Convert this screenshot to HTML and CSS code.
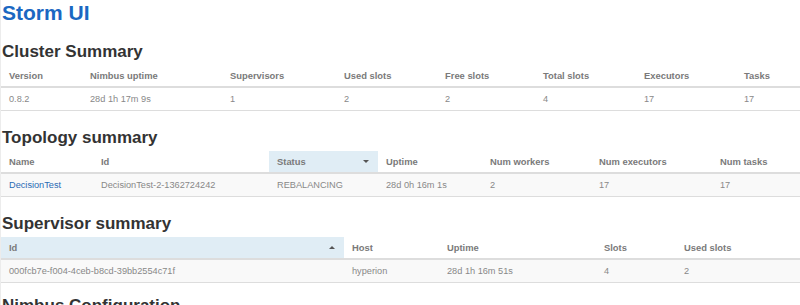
FILE: index.html
```html
<!DOCTYPE html>
<html>
<head>
<meta charset="utf-8">
<title>Storm UI</title>
<link rel="stylesheet" href="styles.css">
</head>
<body>
<h1 class="title">Storm UI</h1>

<h2 class="section-title">Cluster Summary</h2>
<table class="grid">
  <thead>
    <tr>
      <th class="cs-1">Version</th>
      <th class="cs-2">Nimbus uptime</th>
      <th class="cs-3">Supervisors</th>
      <th class="cs-4">Used slots</th>
      <th class="cs-5">Free slots</th>
      <th class="cs-6">Total slots</th>
      <th class="cs-7">Executors</th>
      <th class="cs-8">Tasks</th>
    </tr>
  </thead>
  <tbody>
    <tr>
      <td>0.8.2</td>
      <td>28d 1h 17m 9s</td>
      <td>1</td>
      <td>2</td>
      <td>2</td>
      <td>4</td>
      <td>17</td>
      <td>17</td>
    </tr>
  </tbody>
</table>

<h2 class="section-title">Topology summary</h2>
<table class="grid striped">
  <thead>
    <tr>
      <th class="ts-1">Name</th>
      <th class="ts-2">Id</th>
      <th class="ts-3 sorted"><span class="th-inner"><span>Status</span><span class="arrow arrow-down"></span></span></th>
      <th class="ts-4">Uptime</th>
      <th class="ts-5">Num workers</th>
      <th class="ts-6">Num executors</th>
      <th class="ts-7">Num tasks</th>
    </tr>
  </thead>
  <tbody>
    <tr>
      <td><a class="link" href="#">DecisionTest</a></td>
      <td>DecisionTest-2-1362724242</td>
      <td>REBALANCING</td>
      <td>28d 0h 16m 1s</td>
      <td>2</td>
      <td>17</td>
      <td>17</td>
    </tr>
  </tbody>
</table>

<h2 class="section-title">Supervisor summary</h2>
<table class="grid striped">
  <thead>
    <tr>
      <th class="ss-1 sorted"><span class="th-inner"><span>Id</span><span class="arrow arrow-up"></span></span></th>
      <th class="ss-2">Host</th>
      <th class="ss-3">Uptime</th>
      <th class="ss-4">Slots</th>
      <th class="ss-5">Used slots</th>
    </tr>
  </thead>
  <tbody>
    <tr>
      <td>000fcb7e-f004-4ceb-b8cd-39bb2554c71f</td>
      <td>hyperion</td>
      <td>28d 1h 16m 51s</td>
      <td>4</td>
      <td>2</td>
    </tr>
  </tbody>
</table>

<h2 class="section-title last">Nimbus Configuration</h2>
</body>
</html>
```
FILE: styles.css
```css
html, body {
  margin: 0;
  padding: 0;
  background: #ffffff;
}

body {
  font-family: "Liberation Sans", Arial, sans-serif;
  overflow: hidden;
  border-left: 1px solid #ececec;
}

.title {
  margin: 1px 0 17px 1px;
  font-size: 21px;
  line-height: 24px;
  font-weight: bold;
  color: #1b67c2;
}

.section-title {
  margin: 0 0 3px 1px;
  font-size: 17px;
  line-height: 20px;
  font-weight: bold;
  color: #333333;
}

.grid {
  width: 799px;
  table-layout: fixed;
  border-collapse: separate;
  border-spacing: 0;
  margin-bottom: 17px;
}

.grid th,
.grid td {
  box-sizing: border-box;
  text-align: left;
  line-height: 11px;
  white-space: nowrap;
  overflow: hidden;
}

.grid th {
  font-size: 9.4px;
  font-weight: bold;
  color: #7a7a7a;
  padding: 5px 8px;
  height: 23px;
  border-bottom: 2px solid #dddddd;
}

.grid td {
  font-size: 9.2px;
  color: #888888;
  padding: 6px 8px 5px;
  height: 23px;
  border-bottom: 1px solid #dddddd;
}

.striped tbody tr {
  background: #f9f9f9;
}

.grid th.sorted {
  background: #e0edf5;
}

.th-inner {
  display: flex;
  align-items: center;
  justify-content: space-between;
}

.arrow {
  width: 0;
  height: 0;
  margin-right: 1px;
  border-left: 3px solid transparent;
  border-right: 3px solid transparent;
}

.arrow-down {
  border-top: 3px solid #555555;
}

.arrow-up {
  border-bottom: 3px solid #555555;
}

.link {
  color: #2a6bb5;
  text-decoration: none;
}

.last {
  margin-top: -4px;
}

/* Cluster summary columns */
.cs-1 { width: 81px; }
.cs-2 { width: 140px; }
.cs-3 { width: 114px; }
.cs-4 { width: 101px; }
.cs-5 { width: 98px; }
.cs-6 { width: 101px; }
.cs-7 { width: 100px; }
.cs-8 { width: 64px; }

/* Topology summary columns */
.ts-1 { width: 92px; }
.ts-2 { width: 176px; }
.ts-3 { width: 109px; }
.ts-4 { width: 104px; }
.ts-5 { width: 109px; }
.ts-6 { width: 121px; }
.ts-7 { width: 88px; }

/* Supervisor summary columns */
.ss-1 { width: 343px; }
.ss-2 { width: 95px; }
.ss-3 { width: 157px; }
.ss-4 { width: 80px; }
.ss-5 { width: 124px; }
```
